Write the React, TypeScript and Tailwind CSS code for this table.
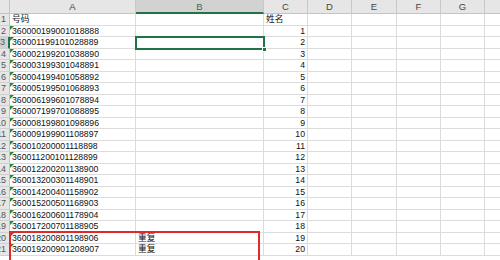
import React from 'react';

const COLS = [
  { key: 'A', w: 126 },
  { key: 'B', w: 128 },
  { key: 'C', w: 44 },
  { key: 'D', w: 44 },
  { key: 'E', w: 45 },
  { key: 'F', w: 44 },
  { key: 'G', w: 44 },
  { key: 'H', w: 40 },
];

const pad = (n: number) => String(n).padStart(2, '0');

// rows 2..21 hold id numbers stored as text
const ids = Array.from({ length: 20 }, (_, i) => `3600${pad(i)}${1990 + i}01${pad(i + 1)}${8888 + i}`);

type Row = { n: number; a: string; b: string; c: string; text?: boolean };

const ROWS: Row[] = [
  { n: 1, a: '号码', b: '', c: '姓名' },
  ...ids.map((id, i) => ({
    n: i + 2,
    a: id,
    b: i >= 18 ? '重复' : '',
    c: String(i + 1),
    text: true,
  })),
];

const font = { fontFamily: '"Liberation Sans", "Noto Sans CJK SC", sans-serif' };

function Cell({ w, children, right }: { w: number; children?: React.ReactNode; right?: boolean }) {
  return (
    <div
      className={`relative shrink-0 h-full border-r border-b border-[#dcdcdc] overflow-hidden whitespace-nowrap px-[2px] ${
        right ? 'text-right' : 'text-left'
      }`}
      style={{ width: w }}
    >
      {children}
    </div>
  );
}

export default function App() {
  return (
    <div className="relative w-[500px] h-[260px] overflow-hidden bg-white text-[#111] text-[8.7px]" style={font}>
      {/* column header bar */}
      <div className="flex h-[14px] bg-[#e6e6e6] text-[#444] text-[9.5px] leading-[14px]">
        <div className="w-[10px] shrink-0 border-r border-b border-[#c4c4c4]" />
        {COLS.map((c) => (
          <div
            key={c.key}
            className={`shrink-0 text-center border-r border-[#c8c8c8] ${
              c.key === 'B' ? 'bg-[#d2d2d2] border-b-2 border-b-[#217346] text-[#3d6b4f]' : 'border-b border-b-[#c4c4c4]'
            }`}
            style={{ width: c.w }}
          >
            {c.key === 'H' ? '' : c.key}
          </div>
        ))}
      </div>

      {ROWS.map((r) => (
        <div key={r.n} className="flex h-[11.5px] leading-[11.5px]">
          <div
            className={`w-[10px] shrink-0 overflow-hidden flex justify-end pr-[3px] text-[#555] text-[9px] border-b border-[#d0d0d0] ${
              r.n === 3 ? 'bg-[#d2d2d2] border-r-2 border-r-[#217346]' : 'bg-[#e6e6e6] border-r border-r-[#c4c4c4]'
            }`}
          >
            <span className="shrink-0">{r.n}</span>
          </div>
          <Cell w={COLS[0].w}>
            {r.text && (
              <span className="absolute left-0 top-0 w-0 h-0 border-t-[4px] border-r-[4px] border-t-[#1e8b3a] border-r-transparent" />
            )}
            {r.a}
          </Cell>
          <Cell w={COLS[1].w}>{r.b}</Cell>
          <Cell w={COLS[2].w} right={r.n > 1}>
            {r.c}
          </Cell>
          {COLS.slice(3).map((c) => (
            <Cell key={c.key} w={c.w} />
          ))}
        </div>
      ))}

      {/* active cell B3 with fill handle */}
      <div className="absolute left-[135px] top-[36px] w-[130px] h-[14px] border-2 border-[#217346]">
        <span className="absolute right-[-4px] bottom-[-4px] w-[5px] h-[5px] bg-[#217346] border border-white" />
      </div>

      {/* red box drawn around the duplicate rows */}
      <div className="absolute left-[9px] top-[231px] w-[251px] h-[40px] border-2 border-[#e0292b]" />
    </div>
  );
}
